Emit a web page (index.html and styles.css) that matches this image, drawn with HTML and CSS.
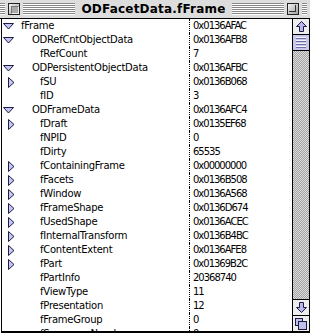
FILE: index.html
```html
<!DOCTYPE html>
<html lang="en">
<head>
    <meta charset="UTF-8">
    <title>ODFacetData.fFrame</title>
    <link rel="stylesheet" href="styles.css">
</head>
<body>
    <div class="window">
        <!-- title bar -->
        <div class="titlebar">
            <div class="stripes short"></div>
            <div class="closebox"><span></span></div>
            <div class="stripes"></div>
            <div class="title">ODFacetData.fFrame</div>
            <div class="stripes"></div>
            <div class="zoombox"><span></span></div>
            <div class="stripes short"></div>
        </div>

        <div class="content">
            <!-- variable list -->
            <div class="list">
                <div class="row"><span class="twisty open"><svg width="11" height="7"><polygon points="0.5,0.5 10.5,0.5 5.5,6" /></svg></span><span class="name lvl0">fFrame</span><span class="value">0x0136AFAC</span></div>
                <div class="row"><span class="twisty open"><svg width="11" height="7"><polygon points="0.5,0.5 10.5,0.5 5.5,6" /></svg></span><span class="name lvl1">ODRefCntObjectData</span><span class="value">0x0136AFB8</span></div>
                <div class="row"><span class="twisty"></span><span class="name lvl2">fRefCount</span><span class="value">7</span></div>
                <div class="row"><span class="twisty open"><svg width="11" height="7"><polygon points="0.5,0.5 10.5,0.5 5.5,6" /></svg></span><span class="name lvl1">ODPersistentObjectData</span><span class="value">0x0136AFBC</span></div>
                <div class="row"><span class="twisty closed"><svg width="7" height="11"><polygon points="0.5,0.5 6,5.5 0.5,10.5" /></svg></span><span class="name lvl2">fSU</span><span class="value">0x0136B068</span></div>
                <div class="row"><span class="twisty"></span><span class="name lvl2">fID</span><span class="value">3</span></div>
                <div class="row"><span class="twisty open"><svg width="11" height="7"><polygon points="0.5,0.5 10.5,0.5 5.5,6" /></svg></span><span class="name lvl1">ODFrameData</span><span class="value">0x0136AFC4</span></div>
                <div class="row"><span class="twisty closed"><svg width="7" height="11"><polygon points="0.5,0.5 6,5.5 0.5,10.5" /></svg></span><span class="name lvl2">fDraft</span><span class="value">0x0135EF68</span></div>
                <div class="row"><span class="twisty"></span><span class="name lvl2">fNPID</span><span class="value">0</span></div>
                <div class="row"><span class="twisty"></span><span class="name lvl2">fDirty</span><span class="value">65535</span></div>
                <div class="row"><span class="twisty closed"><svg width="7" height="11"><polygon points="0.5,0.5 6,5.5 0.5,10.5" /></svg></span><span class="name lvl2">fContainingFrame</span><span class="value">0x00000000</span></div>
                <div class="row"><span class="twisty closed"><svg width="7" height="11"><polygon points="0.5,0.5 6,5.5 0.5,10.5" /></svg></span><span class="name lvl2">fFacets</span><span class="value">0x0136B508</span></div>
                <div class="row"><span class="twisty closed"><svg width="7" height="11"><polygon points="0.5,0.5 6,5.5 0.5,10.5" /></svg></span><span class="name lvl2">fWindow</span><span class="value">0x0136A568</span></div>
                <div class="row"><span class="twisty closed"><svg width="7" height="11"><polygon points="0.5,0.5 6,5.5 0.5,10.5" /></svg></span><span class="name lvl2">fFrameShape</span><span class="value">0x0136D674</span></div>
                <div class="row"><span class="twisty closed"><svg width="7" height="11"><polygon points="0.5,0.5 6,5.5 0.5,10.5" /></svg></span><span class="name lvl2">fUsedShape</span><span class="value">0x0136ACEC</span></div>
                <div class="row"><span class="twisty closed"><svg width="7" height="11"><polygon points="0.5,0.5 6,5.5 0.5,10.5" /></svg></span><span class="name lvl2">fInternalTransform</span><span class="value">0x0136B4BC</span></div>
                <div class="row"><span class="twisty closed"><svg width="7" height="11"><polygon points="0.5,0.5 6,5.5 0.5,10.5" /></svg></span><span class="name lvl2">fContentExtent</span><span class="value">0x0136AFE8</span></div>
                <div class="row"><span class="twisty closed"><svg width="7" height="11"><polygon points="0.5,0.5 6,5.5 0.5,10.5" /></svg></span><span class="name lvl2">fPart</span><span class="value">0x01369B2C</span></div>
                <div class="row"><span class="twisty"></span><span class="name lvl2">fPartInfo</span><span class="value">20368740</span></div>
                <div class="row"><span class="twisty"></span><span class="name lvl2">fViewType</span><span class="value">11</span></div>
                <div class="row"><span class="twisty"></span><span class="name lvl2">fPresentation</span><span class="value">12</span></div>
                <div class="row"><span class="twisty"></span><span class="name lvl2">fFrameGroup</span><span class="value">0</span></div>
                <div class="row"><span class="twisty"></span><span class="name lvl2">fSequenceNumber</span><span class="value">0</span></div>
            </div>

            <!-- scroll bar -->
            <div class="scrollbar">
                <div class="arrow"><svg width="11" height="11"><polygon points="5.5,0.5 10.5,5.5 7.5,5.5 7.5,10.5 3.5,10.5 3.5,5.5 0.5,5.5" /></svg></div>
                <div class="thumb"><span></span><span></span><span></span><span></span></div>
                <div class="track"></div>
                <div class="arrow"><svg width="11" height="11"><polygon points="5.5,10.5 10.5,5.5 7.5,5.5 7.5,0.5 3.5,0.5 3.5,5.5 0.5,5.5" /></svg></div>
                <div class="growbox"><svg width="12" height="12"><rect x="0.5" y="0.5" width="7" height="7" /><rect x="3.5" y="3.5" width="8" height="8" /></svg></div>
            </div>
        </div>
    </div>
</body>
</html>
```

FILE: styles.css
```css
body {
    margin: 0;
    background-color: #fff;
    font-family: "DejaVu Sans", sans-serif;
    color: #000;
}
.window {
    width: 310px;
    height: 333px;
    display: flex;
    flex-direction: column;
    overflow: hidden;
}
.titlebar {
    height: 19px;
    flex: none;
    display: flex;
    align-items: center;
    gap: 3px;
    padding: 0 3px 0 0;
    background-color: #dddddd;
    border-bottom: 1px solid #000;
    box-sizing: border-box;
}
.stripes {
    flex: 1;
    height: 12px;
    background: repeating-linear-gradient(to bottom, #888 0 1px, #fff 1px 2px);
}
.stripes.short {
    flex: none;
    width: 5px;
}
.closebox,
.zoombox {
    width: 12px;
    height: 12px;
    box-sizing: border-box;
    border: 1px solid #222;
    background: linear-gradient(135deg, #f4f4f4, #a0a0a0);
}
.closebox span {
    display: block;
    margin: 2px;
    width: 6px;
    height: 6px;
    background-color: #aaa;
    border: 1px solid #888;
    border-color: #777 #eee #eee #777;
}
.zoombox span {
    display: block;
    width: 6px;
    height: 6px;
    margin: 1px;
    border: 1px solid #333;
    border-top: none;
    border-left: none;
}
.title {
    font-weight: bold;
    font-size: 12px;
    letter-spacing: 0.2px;
    padding: 0 3px;
    line-height: 19px;
}
.content {
    flex: 1;
    display: flex;
    border-left: 1px solid #000;
    border-bottom: 2px solid #000;
    margin-left: 1px;
    min-height: 0;
}
.list {
    flex: 1;
    overflow: hidden;
    font-size: 10px;
}
.row {
    display: grid;
    grid-template-columns: 17px 170px 1fr;
    height: 14px;
    line-height: 14px;
    white-space: nowrap;
}
.twisty {
    display: flex;
    align-items: center;
}
.twisty polygon {
    fill: #c4c4f4;
    stroke: #1c1c40;
    stroke-width: 1;
}
.twisty.open svg {
    margin-left: 1px;
}
.twisty.closed svg {
    margin-left: 6px;
}
.name {
    letter-spacing: -0.25px;
}
.lvl0 { padding-left: 2px; }
.lvl1 { padding-left: 13px; }
.lvl2 { padding-left: 21px; }
.value {
    border-left: 1px dotted #000;
    padding-left: 3px;
    letter-spacing: -1px;
}
.scrollbar {
    width: 16px;
    flex: none;
    display: flex;
    flex-direction: column;
    border-left: 1px solid #000;
    border-right: 1px solid #000;
}
.arrow {
    height: 15px;
    flex: none;
    display: flex;
    justify-content: center;
    align-items: center;
    background-color: #eee;
    border-bottom: 1px solid #000;
}
.arrow:nth-of-type(4) {
    border-top: 1px solid #000;
    border-bottom: none;
}
.arrow polygon {
    fill: #b8b8ee;
    stroke: #1c1c40;
}
.thumb {
    height: 15px;
    flex: none;
    display: flex;
    flex-direction: column;
    justify-content: center;
    gap: 1px;
    background-color: #c8c8ec;
    border-bottom: 1px solid #000;
}
.thumb span {
    display: block;
    height: 1px;
    margin: 0 3px;
    background-color: #f4f4ff;
    border-bottom: 1px solid #7070a0;
}
.track {
    flex: 1;
    background: repeating-conic-gradient(#a4a4a4 0 25%, #dcdcdc 0 50%) 0 0 / 2px 2px;
}
.growbox {
    height: 15px;
    flex: none;
    display: flex;
    justify-content: center;
    align-items: center;
    background-color: #eee;
    border-top: 1px solid #000;
}
.growbox rect {
    fill: #c0c0ee;
    stroke: #1c1c40;
}
```
